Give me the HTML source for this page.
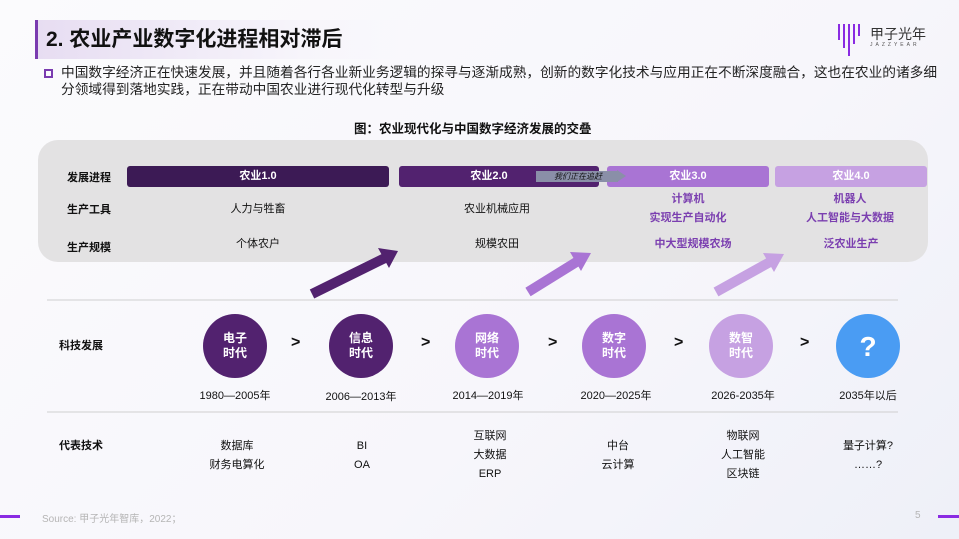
<!DOCTYPE html>
<html><head><meta charset="utf-8"><style>
*{margin:0;padding:0;box-sizing:border-box}
body{width:959px;height:539px;position:relative;overflow:hidden;background:linear-gradient(135deg,#fbfbfd 0%,#f7f6fb 60%,#eef0f8 100%);font-family:"Liberation Sans","Noto Sans CJK SC",sans-serif;color:#111}
.a{position:absolute;white-space:nowrap}
.c{transform:translateX(-50%);text-align:center}
.b{font-weight:bold}
.bar{position:absolute;top:166px;height:21px;border-radius:3px;color:#fff;font-weight:bold;font-size:11px;line-height:21px;text-align:center}
.circ{position:absolute;top:314px;width:64px;height:64px;border-radius:50%;color:#fff;font-weight:bold;font-size:12px;line-height:15px;display:flex;align-items:center;justify-content:center;text-align:center}
.gt{position:absolute;top:334px;font-weight:bold;font-size:16px}
.t{font-size:11px;line-height:19px}
.p{color:#7b3fb0;font-weight:bold}
</style></head><body>
<div class="a" style="left:35px;top:20px;width:380px;height:39px;background:linear-gradient(90deg,#e7ddf2,#f7f5fb 70%,rgba(255,255,255,0));border-left:3px solid #7a3bb0"></div>
<div class="a b" style="left:46px;top:26px;font-size:21px;line-height:27px">2. 农业产业数字化进程相对滞后</div>
<div class="a" style="left:837px;top:22px;width:24px;height:30px">
<svg width="24" height="36" viewBox="0 0 24 36"><g stroke="#8a2be2" stroke-width="2"><line x1="2" y1="2" x2="2" y2="18"/><line x1="7" y1="2" x2="7" y2="26"/><line x1="12" y1="2" x2="12" y2="34"/><line x1="17" y1="2" x2="17" y2="22"/><line x1="22" y1="2" x2="22" y2="14"/></g></svg></div>
<div class="a" style="left:870px;top:24px;font-size:14px;color:#333">甲子光年</div>
<div class="a" style="left:870px;top:42px;font-size:5px;letter-spacing:3px;color:#555">JAZZYEAR</div>
<div class="a" style="left:44px;top:69px;width:9px;height:9px;border:2px solid #7a3bb0"></div>
<div class="a" style="left:61px;top:64px;font-size:13.7px;line-height:17px;color:#222">中国数字经济正在快速发展，并且随着各行各业新业务逻辑的探寻与逐渐成熟，创新的数字化技术与应用正在不断深度融合，这也在农业的诸多细<br>分领域得到落地实践，正在带动中国农业进行现代化转型与升级</div>
<div class="a b" style="left:354px;top:118px;font-size:12.5px">图：农业现代化与中国数字经济发展的交叠</div>
<div class="a" style="left:38px;top:140px;width:890px;height:122px;background:#e3e2e3;border-radius:20px"></div>
<div class="a b" style="left:67px;top:169px;font-size:11px">发展进程</div>
<div class="a b" style="left:67px;top:201px;font-size:11px">生产工具</div>
<div class="a b" style="left:67px;top:239px;font-size:11px">生产规模</div>
<div class="bar" style="left:127px;width:262px;background:#3c1a55">农业1.0</div>
<div class="bar" style="left:399px;width:200px;background:#52226f;text-indent:-20px">农业2.0</div>
<div class="bar" style="left:607px;width:162px;background:#a974d4">农业3.0</div>
<div class="bar" style="left:775px;width:152px;background:#c6a1e2">农业4.0</div>
<div class="a" style="left:536px;top:171px;width:82px;height:11px;background:#8a8fa8;font-size:8px;font-style:italic;line-height:11px;color:#111;padding-left:18px">我们正在追赶</div>
<div class="a" style="left:617px;top:170px;width:0;height:0;border-left:9px solid #8a8fa8;border-top:6px solid transparent;border-bottom:6px solid transparent"></div>
<div class="a t c" style="left:258px;top:200px">人力与牲畜</div>
<div class="a t c" style="left:258px;top:235px">个体农户</div>
<div class="a t c" style="left:497px;top:200px">农业机械应用</div>
<div class="a t c" style="left:497px;top:235px">规模农田</div>
<div class="a t c p" style="left:688px;top:190px">计算机<br>实现生产自动化</div>
<div class="a t c p" style="left:693px;top:235px">中大型规模农场</div>
<div class="a t c p" style="left:850px;top:190px">机器人<br>人工智能与大数据</div>
<div class="a t c p" style="left:851px;top:235px">泛农业生产</div>
<svg class="a" style="left:0;top:0" width="959" height="539">
<g stroke-width="10">
<line x1="312" y1="294" x2="385" y2="258" stroke="#52226f"/>
<line x1="528" y1="292" x2="578" y2="261" stroke="#a974d4"/>
<line x1="716" y1="292" x2="770" y2="262" stroke="#c6a1e2"/>
</g>
<polygon points="398,251 378,248 389,268" fill="#52226f"/>
<polygon points="591,253 570,252 581,271" fill="#a974d4"/>
<polygon points="784,254 763,253 774,272" fill="#c6a1e2"/>
<line x1="47" y1="300" x2="898" y2="300" stroke="#cfcfcf"/>
<line x1="47" y1="412" x2="898" y2="412" stroke="#cfcfcf"/>
<rect x="0" y="515" width="20" height="3" fill="#8a2be2"/>
<rect x="938" y="515" width="21" height="3" fill="#8a2be2"/>
</svg>
<div class="a b" style="left:59px;top:337px;font-size:11px">科技发展</div>
<div class="a b" style="left:59px;top:437px;font-size:11px">代表技术</div>
<div class="circ" style="left:203px;background:#52226f">电子<br>时代</div>
<div class="circ" style="left:329px;background:#52226f">信息<br>时代</div>
<div class="circ" style="left:455px;background:#a974d4">网络<br>时代</div>
<div class="circ" style="left:582px;background:#a974d4">数字<br>时代</div>
<div class="circ" style="left:709px;background:#c6a1e2">数智<br>时代</div>
<div class="circ" style="left:836px;background:#4a9cf3;font-size:28px">?</div>
<div class="gt" style="left:291px">&gt;</div>
<div class="gt" style="left:421px">&gt;</div>
<div class="gt" style="left:548px">&gt;</div>
<div class="gt" style="left:674px">&gt;</div>
<div class="gt" style="left:800px">&gt;</div>
<div class="a t c" style="left:235px;top:387px">1980—2005年</div>
<div class="a t c" style="left:361px;top:388px">2006—2013年</div>
<div class="a t c" style="left:488px;top:387px">2014—2019年</div>
<div class="a t c" style="left:616px;top:387px">2020—2025年</div>
<div class="a t c" style="left:743px;top:387px">2026-2035年</div>
<div class="a t c" style="left:868px;top:387px">2035年以后</div>
<div class="a t c" style="left:237px;top:437px">数据库<br>财务电算化</div>
<div class="a t c" style="left:362px;top:437px">BI<br>OA</div>
<div class="a t c" style="left:490px;top:427px">互联网<br>大数据<br>ERP</div>
<div class="a t c" style="left:618px;top:437px">中台<br>云计算</div>
<div class="a t c" style="left:743px;top:427px">物联网<br>人工智能<br>区块链</div>
<div class="a t c" style="left:868px;top:437px">量子计算?<br>……?</div>
<div class="a" style="left:42px;top:510px;font-size:10px;color:#b5b5b5">Source: 甲子光年智库，2022；</div>
<div class="a" style="left:915px;top:510px;font-size:10px;color:#b5b5b5">5</div>
</body></html>
